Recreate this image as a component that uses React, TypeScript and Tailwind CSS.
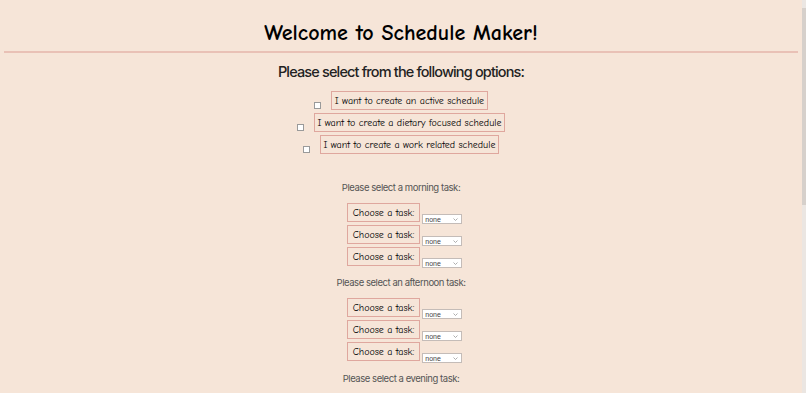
import React from "react";

const comic = "font-['Comic_Sans_MS','Comic_Neue',cursive]";
const sans = "font-['Inter','Noto_Sans',sans-serif]";

const options = [
  "I want to create an active schedule",
  "I want to create a dietary focused schedule",
  "I want to create a work related schedule",
];

const TaskRow = () => (
  <div className="flex h-[22px] items-start gap-[2px]">
    <div
      className={`${comic} flex h-[19px] items-center border border-[#dfa79e] px-[5px] text-[10px] leading-none text-black`}
    >
      Choose a task:
    </div>
    <div className="mt-[11px] flex h-[10px] w-[40px] items-center justify-between border border-[#c4bcb8] bg-white pl-[2px] pr-[3px]">
      <span className="font-['Liberation_Sans',sans-serif] text-[7px] leading-none text-[#444]">
        none
      </span>
      <svg width="5" height="3" viewBox="0 0 5 3">
        <path d="M0.5 0.5 L2.5 2.5 L4.5 0.5" fill="none" stroke="#999" strokeWidth="0.8" />
      </svg>
    </div>
  </div>
);

const TaskGroup = ({ title, first }: { title: string; first?: boolean }) => (
  <>
    <p
      className={`${sans} ${first ? "mt-[27px]" : "mt-[7px]"} text-[9.5px] leading-[14px] tracking-[-0.45px] text-[#555]`}
    >
      {title}
    </p>
    <div className="mt-[8px] flex flex-col items-center pl-[7px]">
      <TaskRow />
      <TaskRow />
      <TaskRow />
    </div>
  </>
);

export default function App() {
  return (
    <div className="flex h-[393px] w-full overflow-hidden bg-[#f6e5d8]">
      <main className="flex flex-1 flex-col items-center">
        <h1 className={`${comic} mt-[19px] text-[22px] font-bold leading-[28px] text-black`}>
          Welcome to Schedule Maker!
        </h1>
        <div className="mx-1 mt-[4px] h-[2px] self-stretch bg-[#e9c1b6]" />
        <h2
          className={`${sans} mt-[9px] text-[14.5px] font-medium leading-[20px] tracking-[-0.85px] text-[#222]`}
        >
          Please select from the following options:
        </h2>
        <div className="mt-[9px] flex flex-col items-center gap-[3px]">
          {options.map((o) => (
            <label key={o} className="flex items-end gap-[10px]">
              <span className="mb-[1px] h-[7px] w-[7px] border border-[#9a9a9a] bg-white" />
              <span
                className={`${comic} flex h-[19px] items-center border border-[#dfa79e] px-[3px] text-[10px] leading-none text-black`}
              >
                {o}
              </span>
            </label>
          ))}
        </div>
        <TaskGroup title="Please select a morning task:" first />
        <TaskGroup title="Please select an afternoon task:" />
        <p className={`${sans} mt-[8px] text-[9.5px] leading-[14px] tracking-[-0.45px] text-[#555]`}>
          Please select a evening task:
        </p>
      </main>
      <div className="flex w-[4px] flex-col bg-[#ebe6e2]">
        <div className="mt-[8px] h-[197px] bg-[#d6d0cb]" />
      </div>
    </div>
  );
}
